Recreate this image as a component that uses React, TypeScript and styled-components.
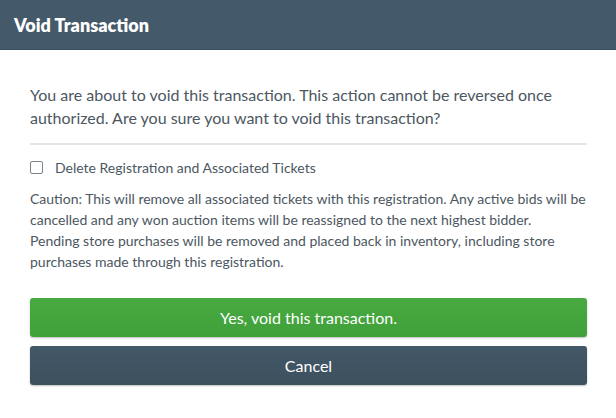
import styled, { createGlobalStyle } from 'styled-components';

const GlobalStyle = createGlobalStyle`
  html, body {
    margin: 0;
    padding: 0;
    background: #ffffff;
  }
  body {
    font-family: Lato, "Open Sans", Arial, sans-serif;
  }
`;

const Modal = styled.div`
  width: 616px;
  height: 418px;
  background: #fff;
  display: flex;
  flex-direction: column;
`;

const Header = styled.header`
  height: 50px;
  flex-shrink: 0;
  background: #44596a;
  border-bottom: 1px solid #3a4d5c;
  box-sizing: border-box;
  display: flex;
  align-items: center;
  padding-left: 14px;
`;

const Title = styled.h2`
  margin: 0;
  color: #fff;
  font-size: 18px;
  font-weight: 800;
`;

const Body = styled.div`
  padding: 33px 29px 0 30px;
  display: flex;
  flex-direction: column;
`;

const Message = styled.p`
  margin: 0;
  color: #4c5761;
  font-size: 16px;
  line-height: 23px;
`;

const Divider = styled.hr`
  margin: 14px 0 12px;
  border: 0;
  border-top: 2px solid #e4e7e9;
`;

const CheckRow = styled.label`
  display: flex;
  align-items: center;
  gap: 12px;
  height: 20px;
  color: #4c5761;
  font-size: 14px;
`;

const Box = styled.span`
  width: 11px;
  height: 11px;
  border: 1px solid #7b848c;
  border-radius: 2px;
  background: #fff;
`;

const Caution = styled.p`
  margin: 11px 0 0;
  color: #4c5761;
  font-size: 14px;
  line-height: 21px;
  white-space: nowrap;
`;

const Actions = styled.div`
  margin-top: 26px;
  display: flex;
  flex-direction: column;
  gap: 9px;
`;

const Button = styled.button<{ $tone: 'go' | 'back' }>`
  height: 39px;
  border: 0;
  border-radius: 3px;
  font-family: inherit;
  font-size: 16px;
  color: #fff;
  background: ${(p) =>
    p.$tone === 'go'
      ? 'linear-gradient(#48aa41, #40a03a)'
      : 'linear-gradient(#435867, #3c505e)'};
  box-shadow: 0 1px 2px rgba(0, 0, 0, 0.25);
  cursor: pointer;
`;

export default function App() {
  return (
    <Modal>
      <GlobalStyle />
      <Header>
        <Title>Void Transaction</Title>
      </Header>
      <Body>
        <Message>
          You are about to void this transaction. This action cannot be reversed once
          authorized. Are you sure you want to void this transaction?
        </Message>
        <Divider />
        <CheckRow>
          <Box />
          Delete Registration and Associated Tickets
        </CheckRow>
        <Caution>
          Caution: This will remove all associated tickets with this registration. Any active bids will be
          <br />
          cancelled and any won auction items will be reassigned to the next highest bidder.
          <br />
          Pending store purchases will be removed and placed back in inventory, including store
          <br />
          purchases made through this registration.
        </Caution>
        <Actions>
          <Button $tone="go">Yes, void this transaction.</Button>
          <Button $tone="back">Cancel</Button>
        </Actions>
      </Body>
    </Modal>
  );
}
